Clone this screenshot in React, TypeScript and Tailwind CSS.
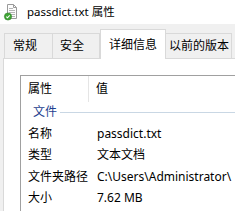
import React from 'react';

const rows = [
  { label: '名称', value: 'passdict.txt' },
  { label: '类型', value: '文本文档' },
  { label: '文件夹路径', value: 'C:\\Users\\Administrator\\' },
  { label: '大小', value: '7.62 MB' },
];

function FileIcon() {
  return (
    <svg width="16" height="18" viewBox="0 0 16 18" className="shrink-0">
      {/* page */}
      <path d="M4.5 1.5h6l3 3v11h-9z" fill="#fdfdfd" stroke="#9a9a9a" strokeWidth="1" />
      <path d="M10.5 1.5v3h3" fill="none" stroke="#9a9a9a" strokeWidth="1" />
      <path d="M6 5.5h4M6 7.5h6M6 9.5h6M6 11.5h6M6 13.5h6" stroke="#b5b5b5" strokeWidth="1" />
      {/* badge */}
      <circle cx="5" cy="13.5" r="3.6" fill="#3fa535" stroke="#2c7d25" strokeWidth="0.6" />
      <path d="M3.3 13.6l1.2 1.2 2.2-2.4" fill="none" stroke="#ffffff" strokeWidth="1.1" />
    </svg>
  );
}

export default function App() {
  return (
    <div
      className="w-[235px] h-[211px] overflow-hidden bg-[#f0f0f0] text-black text-[12px] leading-none"
      style={{ fontFamily: '"Noto Sans", "Noto Sans CJK SC", sans-serif' }}
    >
      {/* Title bar */}
      <div className="h-[24px] bg-white flex items-center pl-[3px] gap-[8px]">
        <FileIcon />
        <span className="text-[11.5px]">passdict.txt 属性</span>
      </div>

      {/* Tabs */}
      <div className="h-[34px] pl-[4px] flex items-end">
        <div className="w-[49px] h-[25px] border border-b-0 border-[#d9d9d9] bg-[#f0f0f0] pl-[8px] flex items-center">
          常规
        </div>
        <div className="w-[47px] h-[25px] border border-l-0 border-b-0 border-[#d9d9d9] bg-[#f0f0f0] pl-[7px] flex items-center">
          安全
        </div>
        <div className="relative z-10 -mb-px w-[66px] h-[30px] border border-b-0 border-[#d9d9d9] bg-white pl-[8px] flex items-center">
          详细信息
        </div>
        <div className="w-[66px] h-[25px] border border-l-0 border-b-0 border-[#d9d9d9] bg-[#f0f0f0] pl-[3px] flex items-center">
          以前的版本
        </div>
      </div>

      {/* Tab panel */}
      <div className="ml-[3px] h-[160px] bg-white border-l border-t border-[#d9d9d9] pl-[16px] pt-[16px]">
        <div className="h-full border-l border-t border-[#a0a0a0]">
          {/* Header */}
          <div className="h-[26px] flex">
            <div className="w-[68px] border-r border-[#e5e5e5] pl-[7px] flex items-center">属性</div>
            <div className="pl-[7px] flex items-center">值</div>
          </div>

          {/* Group */}
          <div className="h-[20px] flex items-center pl-[12px] gap-[3px]">
            <span className="text-[#1e3f8f]">文件</span>
            <div className="flex-1 h-px bg-[#c9d7e4]" />
          </div>

          {/* Rows */}
          <div className="pt-px">
            {rows.map((r) => (
              <div key={r.label} className="h-[21.5px] flex items-center whitespace-nowrap">
                <div className="w-[76px] shrink-0 pl-[7px]">{r.label}</div>
                <div>{r.value}</div>
              </div>
            ))}
          </div>
        </div>
      </div>
    </div>
  );
}
